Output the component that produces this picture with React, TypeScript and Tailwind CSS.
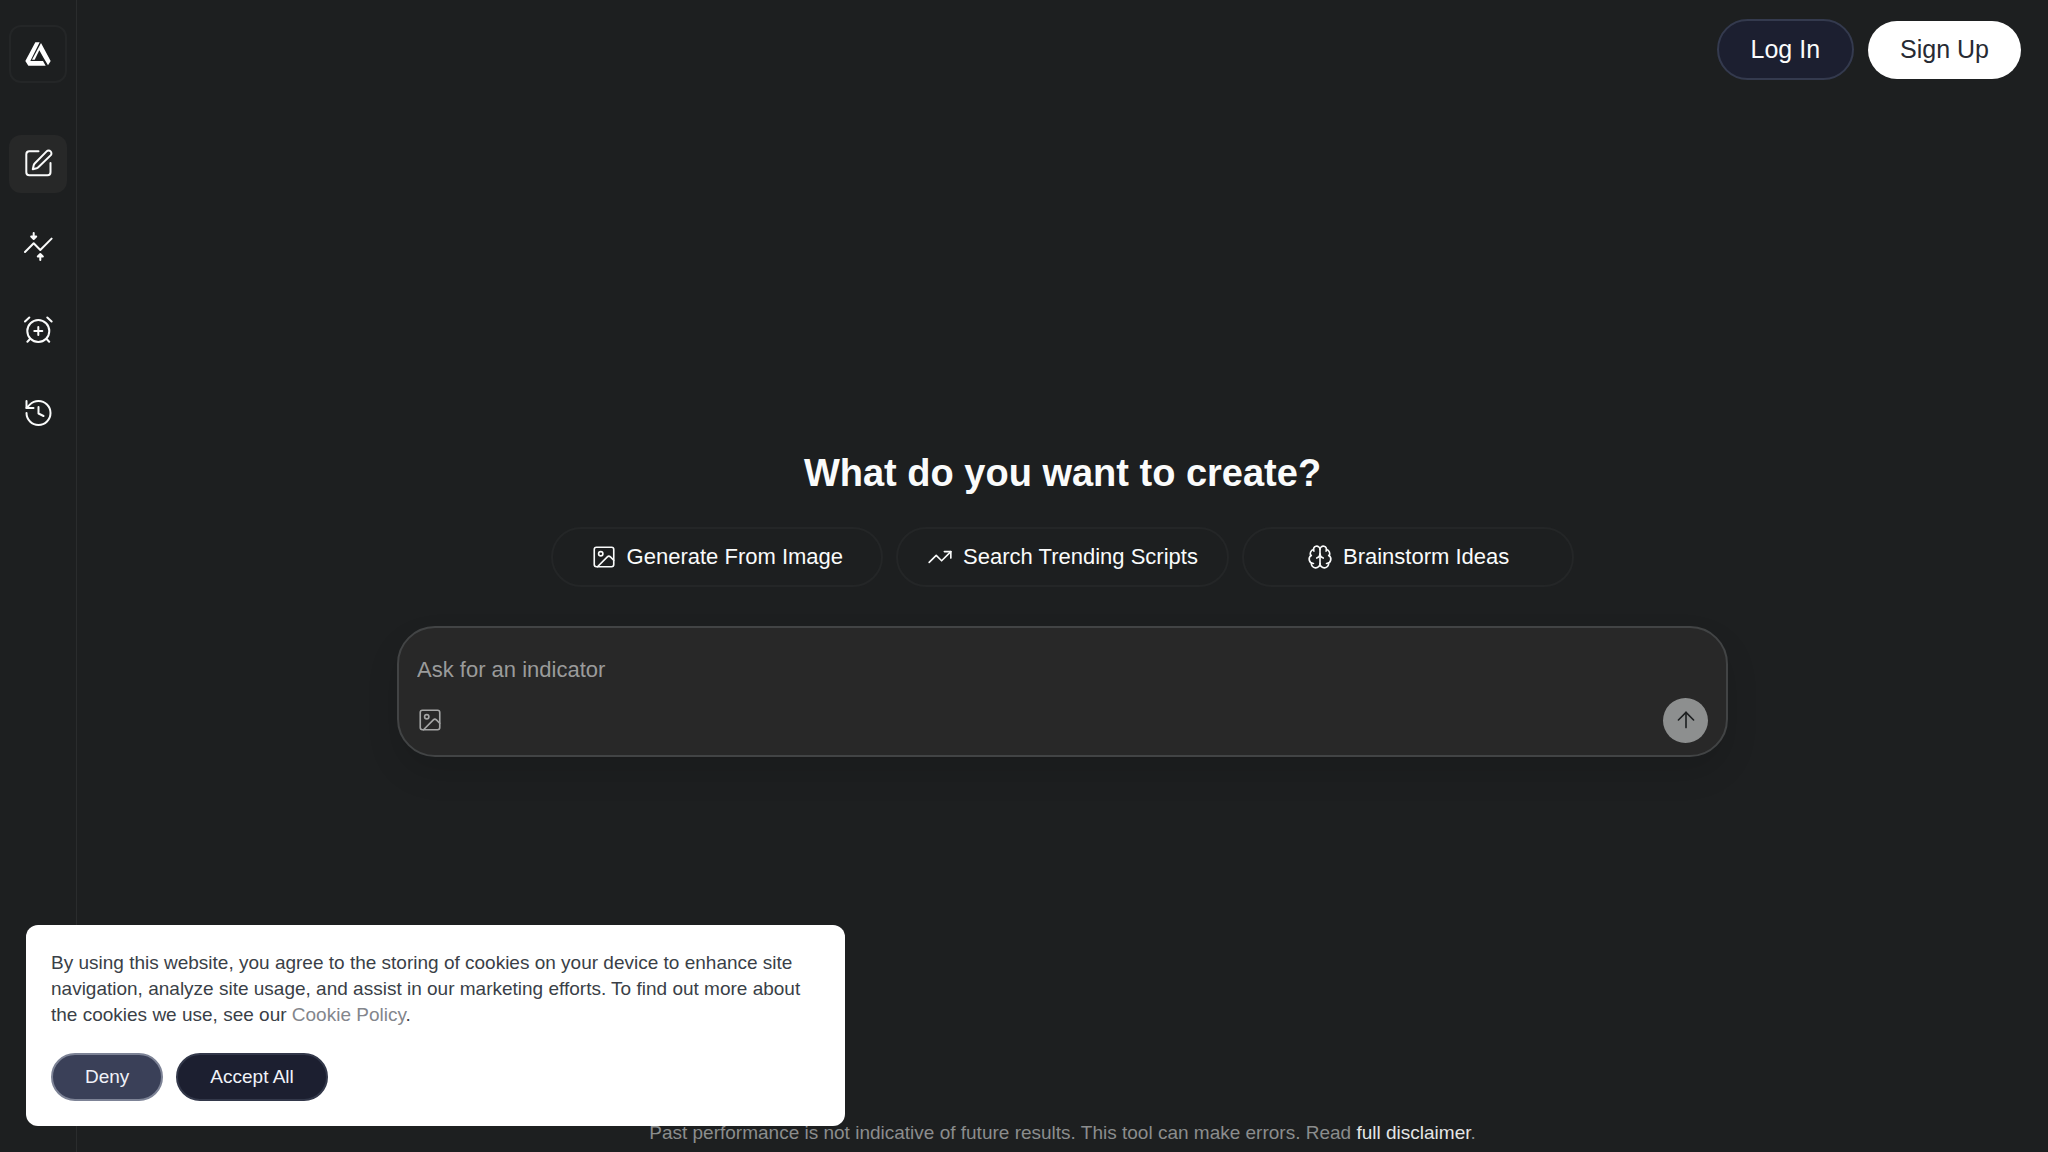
import React from 'react';
import { ArrowUp, Brain, Image, TrendingUp } from 'lucide-react';

const suggestions = [
  { label: 'Generate From Image', icon: Image },
  { label: 'Search Trending Scripts', icon: TrendingUp },
  { label: 'Brainstorm Ideas', icon: Brain },
];

function Logo() {
  return (
    <svg width="26" height="24" viewBox="0 0 78 72" fill="#ffffff" aria-hidden="true">
      <path d="M31 1 H44 L16 57 L54 57 L62 71 H10 L1 57 Z" />
      <path d="M48 3 L77 57 L69 70 L56 48 L43 25 L29 53 H21 Z" />
      <path d="M43 38 L51 53 H35 Z" fill="#1d1f20" />
    </svg>
  );
}

function NavIcon({ children }: { children: React.ReactNode }) {
  return (
    <svg
      width="30"
      height="30"
      viewBox="0 0 30 30"
      fill="none"
      stroke="currentColor"
      strokeWidth="2"
      strokeLinecap="round"
      strokeLinejoin="round"
      aria-hidden="true"
    >
      {children}
    </svg>
  );
}

function ComposeIcon() {
  return (
    <NavIcon>
      <path d="M15.5 2.300H6.300a3 3 0 0 0-3 3v18a3 3 0 0 0 3 3h18.200a3 3 0 0 0 3-3V14" />
      <path d="M23.600 2.400a2.800 2.800 0 0 1 4 4L15.300 18.300a4 4 0 0 1-1.700 1l-3.800 1 .9-4a4 4 0 0 1 1-1.800z" />
    </NavIcon>
  );
}

function VolatilityIcon() {
  return (
    <NavIcon>
      <path d="M2 20L10.700 11.200L17.300 18L28.600 6.600" />
      <path d="M10.700 1v5.500M8.200 4.500l2.500 2.500 2.500-2.500z" />
      <path d="M17.300 28v-5.500M14.800 24.500l2.500-2.500 2.500 2.500z" />
    </NavIcon>
  );
}

function AlarmIcon() {
  return (
    <NavIcon>
      <circle cx="15.300" cy="16" r="11" />
      <path d="M15.300 12v8M11.300 16h8M7 24l-2.600 2.800M23.600 24l2.600 2.800M2 6.500l4.300-4M28.600 6.500l-4.300-4" />
    </NavIcon>
  );
}

function HistoryIcon() {
  return (
    <NavIcon>
      <path d="M3.500 15a12 12 0 1 0 12-12c-3.500 0-6.500 1.400-8.700 3.600L3.500 10" />
      <path d="M3.500 3v7h7M15.500 9v6.500l5 2.500" />
    </NavIcon>
  );
}

const navItems = [
  { label: 'Create', icon: ComposeIcon, active: true },
  { label: 'Indicators', icon: VolatilityIcon, active: false },
  { label: 'Alerts', icon: AlarmIcon, active: false },
  { label: 'History', icon: HistoryIcon, active: false },
];

function Sidebar() {
  return (
    <aside className="w-[77px] shrink-0 border-r border-[#2a2c2d] flex flex-col items-center pt-[25px]">
      <a href="#" aria-label="Home" className="size-[58px] rounded-xl border-2 border-[#242627] flex items-center justify-center">
        <Logo />
      </a>
      <nav className="mt-[52px] flex flex-col gap-[25px]">
        {navItems.map(({ label, icon: Icon, active }) => (
          <a
            key={label}
            href="#"
            aria-label={label}
            className={`size-[58px] rounded-xl flex items-center justify-center ${active ? 'bg-[#272828]' : ''}`}
          >
            <Icon />
          </a>
        ))}
      </nav>
    </aside>
  );
}

function PromptBox() {
  const [prompt, setPrompt] = React.useState('');

  return (
    <form
      className="mt-[39px] w-full max-w-[1331px] rounded-[38px] border-2 border-[#424445] bg-[#282828] px-[18px] pt-[26px] pb-3 shadow-[0_16px_32px_rgba(0,0,0,0.12)]"
      onSubmit={(e) => e.preventDefault()}
    >
      <input
        type="text"
        aria-label="Ask for an indicator"
        placeholder="Ask for an indicator"
        value={prompt}
        onChange={(e) => setPrompt(e.target.value)}
        className="block w-full h-8 text-[22px] outline-none placeholder:text-[#9a9b9b]"
      />
      <div className="mt-3 flex items-center justify-between">
        <button type="button" aria-label="Attach image" className="text-[#a5a6a6]">
          <Image size={26} strokeWidth={1.5} />
        </button>
        <button type="submit" aria-label="Send" className="size-[45px] rounded-full bg-[#8d8f8f] text-[#1d1f20] flex items-center justify-center">
          <ArrowUp size={26} strokeWidth={1.5} />
        </button>
      </div>
    </form>
  );
}

function CookieBanner() {
  return (
    <section aria-label="Cookies" className="fixed left-[26px] bottom-[26px] w-[819px] rounded-xl bg-white p-[25px] text-[#3a3f47]">
      <p className="text-[19px] leading-[26px]">
        By using this website, you agree to the storing of cookies on your device to enhance site navigation, analyze
        site usage, and assist in our marketing efforts. To find out more about the cookies we use, see our{' '}
        <a href="#" className="text-[#83868c]">Cookie Policy</a>.
      </p>
      <div className="mt-[25px] flex gap-[13px] text-[19px] text-[#f0f2f8]">
        <button className="h-12 px-8 rounded-full border-2 border-[#7d8396] bg-[#3a4058]">Deny</button>
        <button className="h-12 px-8 rounded-full border-2 border-[#33384a] bg-[#1c1f30]">Accept All</button>
      </div>
    </section>
  );
}

export default function App() {
  return (
    <div className="min-h-screen flex bg-[#1d1f20] text-[#fafbfb] font-['Liberation_Sans',sans-serif]">
      <Sidebar />
      <div className="flex-1 flex flex-col">
        <header className="flex items-center justify-end gap-[14px] pt-[19px] pb-[18px] pr-[27px] text-[25px]">
          <button className="h-[61px] px-8 rounded-full border-2 border-[#343a4e] bg-[#1c1f30]">Log In</button>
          <button className="h-[58px] px-8 rounded-full bg-white text-[#272a33]">Sign Up</button>
        </header>

        <main className="flex-1 flex flex-col items-center justify-center">
          <h1 className="text-[38px] leading-[46px] font-bold">What do you want to create?</h1>
          <div className="mt-[31px] w-full max-w-[1024px] grid grid-cols-3 gap-[13px]">
            {suggestions.map(({ label, icon: Icon }) => (
              <button
                key={label}
                className="h-[60px] rounded-full border-2 border-[#242627] flex items-center justify-center gap-[10px] text-[22px] whitespace-nowrap"
              >
                <Icon size={26} strokeWidth={1.5} />
                {label}
              </button>
            ))}
          </div>
          <PromptBox />
        </main>

        <footer className="pt-[11px] pb-[5px] text-center text-[19px] leading-7 text-[#8b8d8d]">
          Past performance is not indicative of future results. This tool can make errors. Read{' '}
          <a href="#" className="text-[#e4e5e5]">full disclaimer</a>.
        </footer>
      </div>
      <CookieBanner />
    </div>
  );
}
